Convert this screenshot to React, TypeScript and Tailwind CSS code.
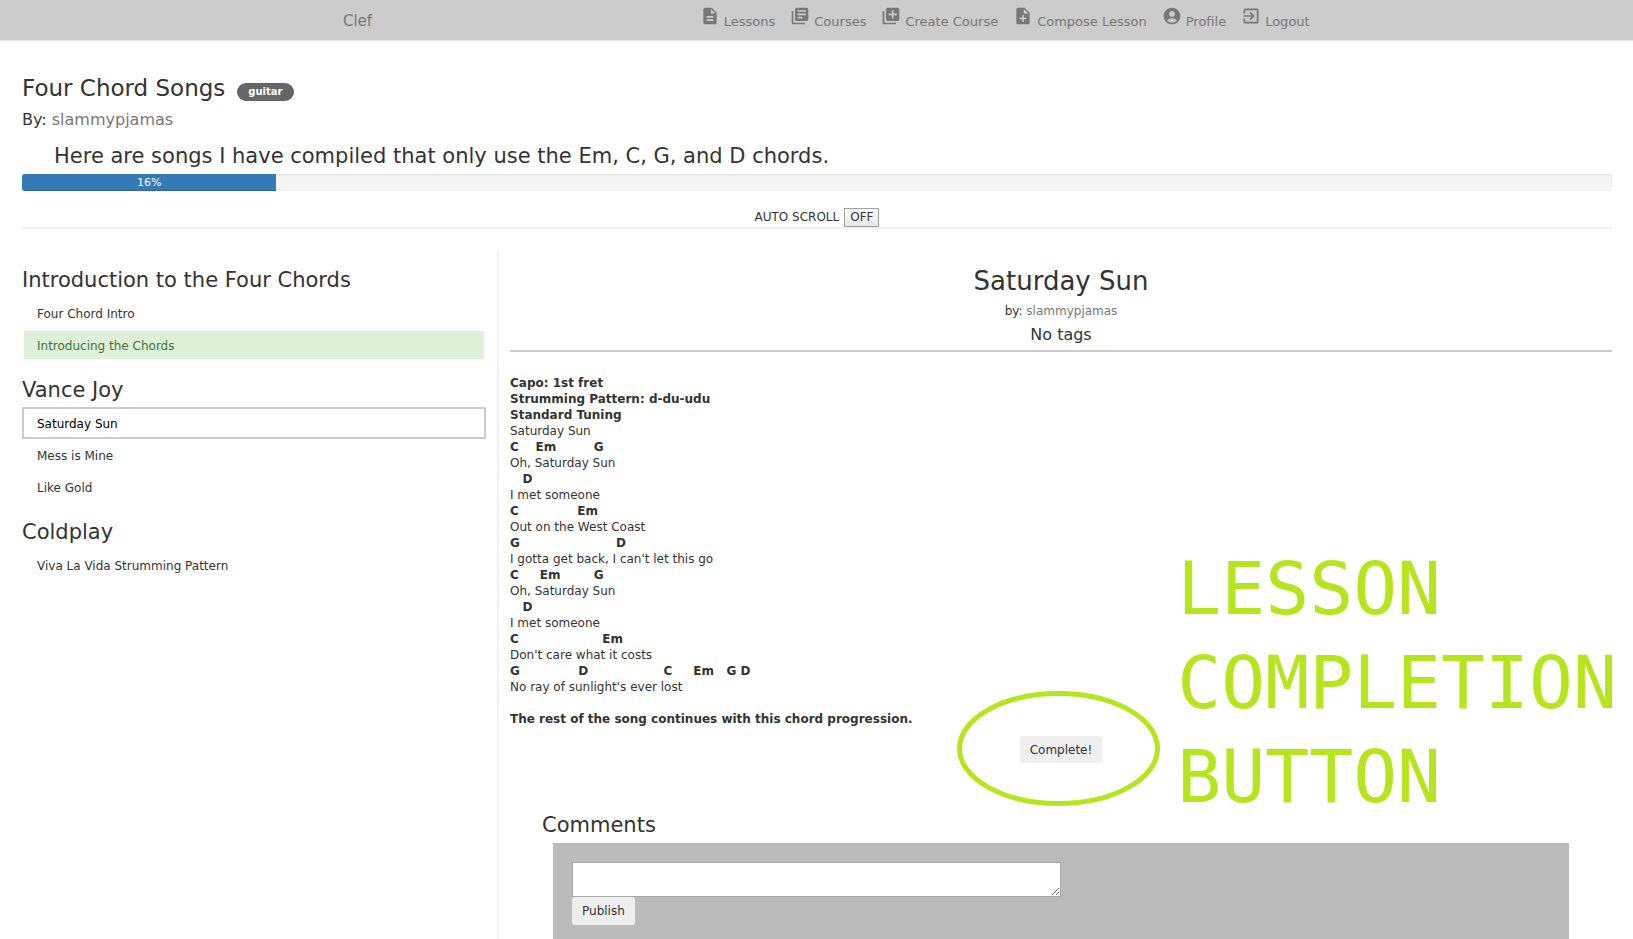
import React from "react";
import {
  MdAccountCircle,
  MdDescription,
  MdExitToApp,
  MdLibraryAdd,
  MdLibraryBooks,
  MdNoteAdd,
} from "react-icons/md";

const navItems = [
  { label: "Lessons", Icon: MdDescription },
  { label: "Courses", Icon: MdLibraryBooks },
  { label: "Create Course", Icon: MdLibraryAdd },
  { label: "Compose Lesson", Icon: MdNoteAdd },
  { label: "Profile", Icon: MdAccountCircle },
  { label: "Logout", Icon: MdExitToApp },
];

type LessonState = "open" | "done" | "current";

const sections: { title: string; lessons: { name: string; state: LessonState }[] }[] = [
  {
    title: "Introduction to the Four Chords",
    lessons: [
      { name: "Four Chord Intro", state: "open" },
      { name: "Introducing the Chords", state: "done" },
    ],
  },
  {
    title: "Vance Joy",
    lessons: [
      { name: "Saturday Sun", state: "current" },
      { name: "Mess is Mine", state: "open" },
      { name: "Like Gold", state: "open" },
    ],
  },
  {
    title: "Coldplay",
    lessons: [{ name: "Viva La Vida Strumming Pattern", state: "open" }],
  },
];

const lessonStyles: Record<LessonState, string> = {
  open: "border-white text-[#333333]",
  done: "border-white bg-[#dff0d8] bg-clip-padding text-[#3c763d]",
  current: "border-[#cccccc] text-black",
};

const gap = (n: number) => " ".repeat(n);

const song: { text: string; bold?: boolean }[] = [
  { text: "Capo: 1st fret", bold: true },
  { text: "Strumming Pattern: d-du-udu", bold: true },
  { text: "Standard Tuning", bold: true },
  { text: "Saturday Sun" },
  { text: `C${gap(4)}Em${gap(9)}G`, bold: true },
  { text: "Oh, Saturday Sun" },
  { text: `${gap(3)}D`, bold: true },
  { text: "I met someone" },
  { text: `C${gap(14)}Em`, bold: true },
  { text: "Out on the West Coast" },
  { text: `G${gap(23)}D`, bold: true },
  { text: "I gotta get back, I can't let this go" },
  { text: `C${gap(5)}Em${gap(8)}G`, bold: true },
  { text: "Oh, Saturday Sun" },
  { text: `${gap(3)}D`, bold: true },
  { text: "I met someone" },
  { text: `C${gap(20)}Em`, bold: true },
  { text: "Don't care what it costs" },
  { text: `G${gap(14)}D${gap(18)}C${gap(5)}Em${gap(3)}G${gap(1)}D`, bold: true },
  { text: "No ray of sunlight's ever lost" },
  { text: "" },
  { text: "The rest of the song continues with this chord progression.", bold: true },
];

function NavBar() {
  return (
    <header className="flex h-[41px] items-start border-b border-[#e7e7e7] bg-[#cccccc] pr-[19.8%] pl-[21%] text-[#777777]">
      <a href="#home" className="pt-[11px] text-[15px] leading-[20px]">
        Clef
      </a>
      <nav className="ml-auto flex gap-[15px]">
        {navItems.map(({ label, Icon }) => (
          <a key={label} href="#nav" className="flex gap-[4px] pt-[6px] whitespace-nowrap">
            <Icon className="size-5" />
            <span className="pt-[7px] text-[13px] leading-[18px]">{label}</span>
          </a>
        ))}
      </nav>
    </header>
  );
}

function CourseHeader() {
  return (
    <section className="border-b-2 border-[#f1f1f1] pt-[33px]">
      <div className="flex items-end gap-[12px]">
        <h1 className="text-[23px] leading-[28px]">Four Chord Songs</h1>
        <span className="mb-px rounded-full bg-[#666666] px-[11px] text-[10px] leading-[18px] font-bold text-white">
          guitar
        </span>
      </div>
      <p className="mt-[8px] text-[16px] leading-[20px]">
        By:{" "}
        <a href="#author" className="text-[#777777]">
          slammypjamas
        </a>
      </p>
      <p className="mt-[12px] pl-8 text-[21px] leading-[28px]">
        Here are songs I have compiled that only use the Em, C, G, and D chords.
      </p>
      <div className="mt-[4px] h-[17px] overflow-hidden rounded-[3px] bg-[#f5f5f5] shadow-[inset_0_1px_2px_rgba(0,0,0,0.1)]">
        <div
          className="h-full bg-[#337ab7] text-center text-[11px] leading-[17px] text-white shadow-[inset_0_-1px_0_rgba(0,0,0,0.15)]"
          style={{ width: "16%" }}
        >
          16%
        </div>
      </div>
      <div className="mt-[17px] flex items-baseline justify-center gap-[5px] text-[12px]">
        <label htmlFor="autoscroll">AUTO SCROLL</label>
        <button
          id="autoscroll"
          type="button"
          className="h-[19px] border border-[#a0a0a0] bg-linear-to-b from-[#fafafa] to-[#e8e8e8] px-[5px] leading-[17px]"
        >
          OFF
        </button>
      </div>
    </section>
  );
}

function Sidebar() {
  return (
    <aside className="w-[30%] shrink-0 border-r-2 border-[#f1f1f1] pr-[11px]">
      {sections.map((section) => (
        <section key={section.title} className="pt-[15px]">
          <h2 className="pb-[3px] text-[21px] leading-[28px]">{section.title}</h2>
          <ul>
            {section.lessons.map(({ name, state }) => (
              <li key={name}>
                <a
                  href="#lesson"
                  className={`block h-8 border-2 pl-[13px] text-[12px] leading-[30px] ${lessonStyles[state]}`}
                >
                  {name}
                </a>
              </li>
            ))}
          </ul>
        </section>
      ))}
    </aside>
  );
}

function CompletionNote() {
  return (
    <>
      <svg
        className="pointer-events-none absolute top-[-45px] left-[-63px] h-[115px] w-[203px] max-w-none"
        viewBox="0 0 203 115"
        fill="none"
        stroke="#b5e61d"
        strokeWidth="5"
        aria-hidden="true"
      >
        <ellipse cx="101.5" cy="57.5" rx="99" ry="55" />
      </svg>
      <p className="pointer-events-none absolute bottom-[-61px] left-full ml-[75px] font-['DejaVu_Sans_Mono',monospace] text-[73px] leading-[94px] text-[#b5e61d]">
        LESSON
        <br />
        COMPLETION
        <br />
        BUTTON
      </p>
    </>
  );
}

function Comments() {
  return (
    <section className="mt-[48px] px-8">
      <h2 className="pb-[4px] text-[21px] leading-[28px]">Comments</h2>
      <div className="mx-[11px] bg-[#bbbbbb] px-[19px] pt-[19px] pb-16">
        <textarea
          aria-label="Comment"
          className="block h-[35px] w-1/2 resize border border-[#a9a9a9] bg-white"
        />
        <button
          type="button"
          className="h-7 rounded-[3px] bg-[#efefef] px-[10px] text-[12px] leading-[18px]"
        >
          Publish
        </button>
      </div>
    </section>
  );
}

function Lesson() {
  return (
    <main className="min-w-0 flex-1 pl-[11px]">
      <div className="border-b-2 border-[#cccccc] pt-[12px] pb-[5px] text-center">
        <h2 className="text-[26px] leading-[36px]">Saturday Sun</h2>
        <p className="mt-[4px] text-[12px] leading-[16px]">
          by:{" "}
          <a href="#author" className="text-[#777777]">
            slammypjamas
          </a>
        </p>
        <p className="mt-[6px] text-[16px] leading-[20px]">No tags</p>
      </div>
      <div className="mt-[23px] text-[12px] leading-[16px] whitespace-pre">
        {song.map((line, i) => (
          <p key={i} className={line.bold ? "h-4 font-bold" : "h-4"}>
            {line.text}
          </p>
        ))}
      </div>
      <div className="mt-[9px] flex justify-center">
        <div className="relative">
          <button
            type="button"
            className="h-[27px] rounded-[3px] bg-[#efefef] px-[10px] text-[12px] leading-[18px]"
          >
            Complete!
          </button>
          <CompletionNote />
        </div>
      </div>
      <Comments />
    </main>
  );
}

export default function App() {
  return (
    <div className="h-screen overflow-hidden bg-white font-['DejaVu_Sans',Verdana,sans-serif] text-[#333333]">
      <NavBar />
      <div className="pr-[21px] pl-[22px]">
        <CourseHeader />
        <div className="mt-[22px] flex">
          <Sidebar />
          <Lesson />
        </div>
      </div>
    </div>
  );
}
